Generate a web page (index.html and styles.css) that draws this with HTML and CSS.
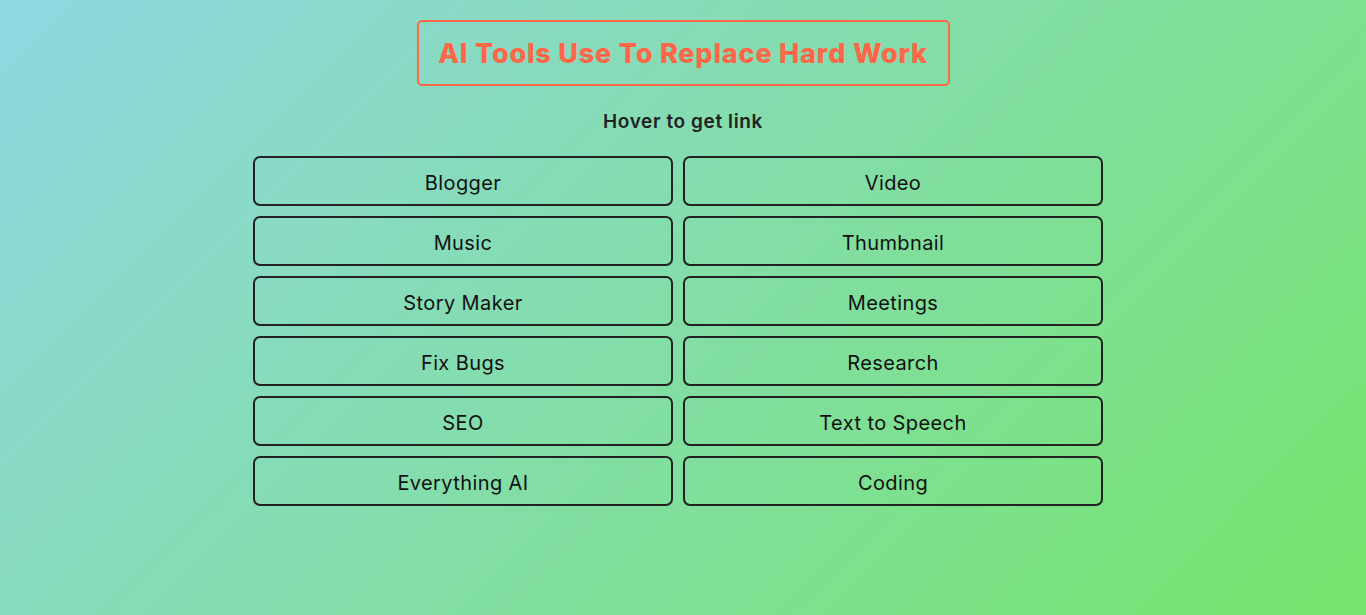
FILE: index.html
```html
<!DOCTYPE html>
<html lang="en">
<head>
<meta charset="utf-8">
<title>AI Tools</title>
<link rel="stylesheet" href="styles.css">
</head>
<body>
<main class="page">
  <h1 class="title">AI Tools Use To Replace Hard Work</h1>
  <p class="hint">Hover to get link</p>
  <div class="grid">
    <a class="tool">Blogger</a>
    <a class="tool">Video</a>
    <a class="tool">Music</a>
    <a class="tool">Thumbnail</a>
    <a class="tool">Story Maker</a>
    <a class="tool">Meetings</a>
    <a class="tool">Fix Bugs</a>
    <a class="tool">Research</a>
    <a class="tool">SEO</a>
    <a class="tool">Text to Speech</a>
    <a class="tool">Everything AI</a>
    <a class="tool">Coding</a>
  </div>
</main>
</body>
</html>
```

FILE: styles.css
```css
html, body {
  margin: 0;
  padding: 0;
  height: 100%;
}
body {
  background: linear-gradient(135deg, #8fd7e2, #76e46c);
  font-family: Inter, "Open Sans", sans-serif;
  color: #111;
}
.page {
  display: flex;
  flex-direction: column;
  align-items: center;
  padding-top: 20px;
}
.title {
  margin: 0;
  box-sizing: border-box;
  width: 533px;
  height: 66px;
  display: flex;
  align-items: center;
  justify-content: center;
  border: 2px solid #ff6748;
  border-radius: 5px;
  color: #ff6748;
  font-size: 27px;
  font-weight: 800;
  letter-spacing: 0.8px;
  white-space: nowrap;
  padding-top: 1px;
}
.hint {
  margin: 22px 0 0;
  height: 26px;
  line-height: 26px;
  font-size: 19px;
  font-weight: 600;
  letter-spacing: 0.6px;
  color: #222;
  padding-top: 1px;
  padding-bottom: 1px;
}
.grid {
  margin-top: 20px;
  display: grid;
  grid-template-columns: 430px 430px;
  row-gap: 10px;
}
.tool {
  box-sizing: border-box;
  width: 420px;
  height: 50px;
  border: 2px solid #222;
  border-radius: 7px;
  display: flex;
  align-items: center;
  justify-content: center;
  font-size: 20px;
  font-weight: 400;
  letter-spacing: 0.4px;
  color: #111;
  padding-top: 4px;
  cursor: pointer;
}
```
